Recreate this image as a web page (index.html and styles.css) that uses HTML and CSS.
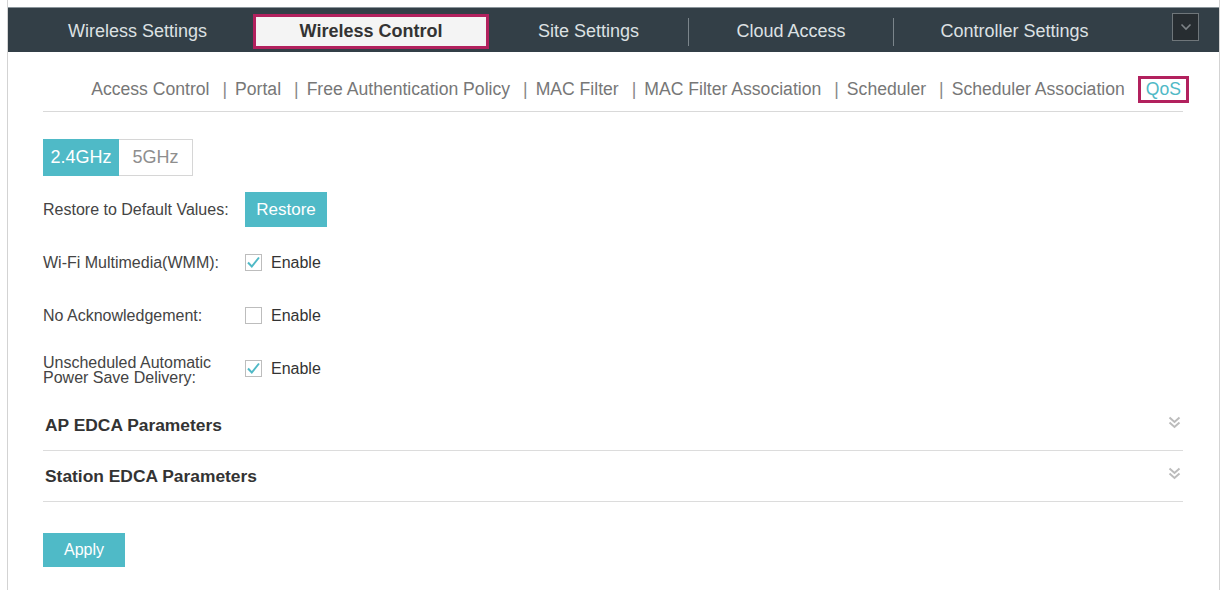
FILE: index.html
```html
<!DOCTYPE html>
<html lang="en">
<head>
<meta charset="utf-8">
<title>QoS</title>
<link rel="stylesheet" href="styles.css">
</head>
<body>
<div class="page">
  <div class="topbar">
    <nav class="tabs">
      <div class="tab t1"><span>Wireless Settings</span></div>
      <div class="tab t2 active"><span>Wireless Control</span></div>
      <div class="tab t3"><span>Site Settings</span></div>
      <div class="tab t4 sep"><span>Cloud Access</span></div>
      <div class="tab t5 sep"><span>Controller Settings</span></div>
    </nav>
    <div class="more">
      <svg width="12" height="8" viewBox="0 0 12 8"><path d="M1.5 1.5 L6 6 L10.5 1.5" fill="none" stroke="#7d8387" stroke-width="1.6"/></svg>
    </div>
  </div>

  <div class="content">
    <div class="subnav-wrap">
      <div class="subnav">
        <span class="sn">Access Control</span><span class="pipe">|</span>
        <span class="sn">Portal</span><span class="pipe">|</span>
        <span class="sn">Free Authentication Policy</span><span class="pipe">|</span>
        <span class="sn">MAC Filter</span><span class="pipe">|</span>
        <span class="sn">MAC Filter Association</span><span class="pipe">|</span>
        <span class="sn">Scheduler</span><span class="pipe">|</span>
        <span class="sn">Scheduler Association</span>
        <span class="sn current">QoS</span>
      </div>
    </div>

    <div class="freq">
      <span class="freq-btn on">2.4GHz</span><span class="freq-btn off">5GHz</span>
    </div>

    <div class="row first">
      <div class="label">Restore to Default Values:</div>
      <button class="btn restore">Restore</button>
    </div>

    <div class="row">
      <div class="label">Wi-Fi Multimedia(WMM):</div>
      <label class="check"><span class="box checked"><svg width="15" height="15" viewBox="0 0 15 15"><path d="M2 7.5 L5.8 11.5 L13 2.5" fill="none" stroke="#4fb9c6" stroke-width="2"/></svg></span>Enable</label>
    </div>

    <div class="row">
      <div class="label">No Acknowledgement:</div>
      <label class="check"><span class="box"></span>Enable</label>
    </div>

    <div class="row">
      <div class="label two">Unscheduled Automatic<br>Power Save Delivery:</div>
      <label class="check"><span class="box checked"><svg width="15" height="15" viewBox="0 0 15 15"><path d="M2 7.5 L5.8 11.5 L13 2.5" fill="none" stroke="#4fb9c6" stroke-width="2"/></svg></span>Enable</label>
    </div>

    <div class="section first-sec">
      <span class="sec-title">AP EDCA Parameters</span>
      <svg class="dbl" width="13" height="13" viewBox="0 0 13 13"><path d="M1.5 1.5 L6.5 6 L11.5 1.5 M1.5 6.5 L6.5 11 L11.5 6.5" fill="none" stroke="#bcbcbc" stroke-width="2"/></svg>
    </div>
    <div class="section">
      <span class="sec-title">Station EDCA Parameters</span>
      <svg class="dbl" width="13" height="13" viewBox="0 0 13 13"><path d="M1.5 1.5 L6.5 6 L11.5 1.5 M1.5 6.5 L6.5 11 L11.5 6.5" fill="none" stroke="#bcbcbc" stroke-width="2"/></svg>
    </div>

    <button class="btn apply">Apply</button>
  </div>
</div>
</body>
</html>
```

FILE: styles.css
```css
* { box-sizing: border-box; }
html, body { margin: 0; padding: 0; background: #fff; }
body { font-family: "Liberation Sans", Arial, sans-serif; color: #333; }

.page {
  margin-left: 7px;
  width: 1213px;
  min-height: 590px;
  border-left: 1px solid #d3d3d3;
  border-right: 1px solid #d3d3d3;
  padding-top: 7px;
}

.topbar {
  height: 45px;
  background: #333f47;
  border-top: 1px solid #8b959b;
  display: flex;
  align-items: flex-start;
}
.tabs {
  display: flex;
  padding-left: 14px;
  margin-top: 6px;
}
.tab {
  height: 35px;
  display: flex;
  align-items: center;
  color: #dde1e3;
  font-size: 18px;
}
.tab span { flex: 1; text-align: center; }
.t1 { width: 231px; }
.t2 { width: 236px; }
.t3 { width: 199px; }
.t4 { width: 205px; }
.t5 { width: 242px; }
.tab.sep::before {
  content: "";
  width: 1px;
  height: 28px;
  background: #7b858b;
}
.tab.active {
  background: #f4f4f4;
  border: 3px solid #b2215e;
  color: #333;
  font-weight: bold;
}
.more {
  margin-left: auto;
  margin-right: 20px;
  margin-top: 5px;
  width: 27px;
  height: 28px;
  border: 1px solid #6f767a;
  background: #272d31;
  display: flex;
  align-items: center;
  justify-content: center;
}

.content {
  padding: 0 36px 0 35px;
}

.subnav-wrap {
  margin-top: 24px;
  padding-bottom: 8px;
  border-bottom: 1px solid #d9d9d9;
}
.subnav {
  display: flex;
  justify-content: flex-end;
  align-items: center;
  height: 27px;
  margin-right: -6px;
  font-size: 17.6px;
  color: #777;
  white-space: nowrap;
}
.pipe {
  margin: 0 8px 0 13px;
  color: #888;
}
.sn.current {
  margin-left: 13px;
  height: 27px;
  border: 3px solid #b2215e;
  padding: 0 5px;
  color: #4fb9c6;
  display: flex;
  align-items: center;
}

.freq {
  display: flex;
  margin-top: 27px;
  height: 37px;
}
.freq-btn {
  display: flex;
  align-items: center;
  justify-content: center;
  font-size: 18px;
}
.freq-btn.on {
  width: 76px;
  background: #4fbac7;
  color: #fff;
}
.freq-btn.off {
  width: 74px;
  border: 1px solid #d6d6d6;
  border-left: none;
  color: #8e8e8e;
}

.row {
  display: flex;
  align-items: center;
  height: 35px;
  margin-top: 18px;
}
.row.first { margin-top: 16px; }
.label {
  width: 202px;
  font-size: 16px;
  color: #444;
}
.label.two { line-height: 15px; padding-top: 2px; }

.btn {
  border: none;
  background: #4fbac7;
  color: #fff;
  font-family: "Liberation Sans", Arial, sans-serif;
  padding: 0;
}
.restore {
  width: 82px;
  height: 35px;
  font-size: 17px;
}

.check {
  display: flex;
  align-items: center;
  font-size: 16px;
  color: #333;
}
.box {
  width: 17px;
  height: 17px;
  border: 1px solid #bdbdbd;
  background: #fff;
  margin-right: 9px;
  display: flex;
  align-items: center;
  justify-content: center;
}

.section {
  height: 51px;
  border-bottom: 1px solid #dcdcdc;
  display: flex;
  align-items: center;
  justify-content: space-between;
  padding: 0 2px 0 2px;
}
.section.first-sec { margin-top: 14px; }
.sec-title {
  font-size: 17.4px;
  font-weight: bold;
  color: #333;
}
.dbl { margin-top: -6px; }

.apply {
  display: block;
  margin-top: 31px;
  width: 82px;
  height: 34px;
  font-size: 16px;
}
```
